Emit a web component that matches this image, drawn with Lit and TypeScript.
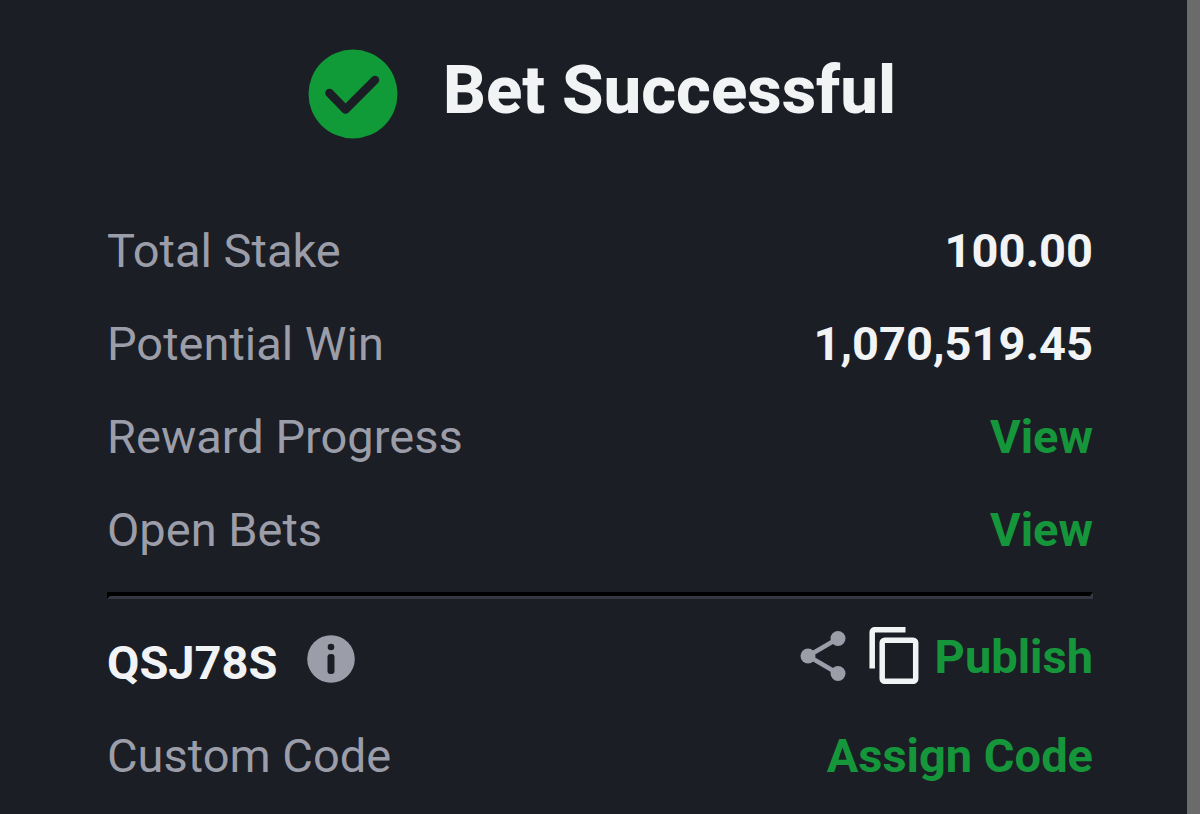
import { LitElement, html, css } from "lit";
import { customElement } from "lit/decorators.js";

@customElement("app-root")
export class AppRoot extends LitElement {
  static styles = css`
    :host {
      display: block;
      box-sizing: border-box;
      min-height: 100vh;
      background: #1b1e25;
      border-right: 13px solid #6a6b6a;
      font-family: Roboto, sans-serif;
      font-size: 47px;
      line-height: 56px;
      color: #9b9da9;
    }
    .sheet {
      padding: 49px 94px 0 107px;
    }
    header {
      display: flex;
      align-items: center;
      justify-content: center;
      gap: 45px;
      padding-left: 4px;
      margin-bottom: 84px;
    }
    h1 {
      margin: 0;
      font-size: 67px;
      line-height: 80px;
      font-weight: 800;
      color: #f2f3f5;
      padding-bottom: 8px;
    }
    svg {
      display: block;
    }
    .check {
      width: 90px;
      height: 90px;
    }
    .rows {
      display: grid;
      gap: 37px;
      margin: 0;
    }
    .row {
      display: flex;
      align-items: center;
      justify-content: space-between;
    }
    dt,
    dd {
      margin: 0;
    }
    dd,
    .code {
      font-weight: 700;
      color: #f2f3f5;
    }
    a,
    button {
      font: inherit;
      font-weight: 700;
      color: #16963a;
      text-decoration: none;
      background: none;
      border: 0;
      padding: 0;
      cursor: pointer;
    }
    .rule {
      margin: 34px 0 28px;
      border: 3px solid;
      border-top-width: 4px;
      border-color: #000 #353843 #353843 #000;
    }
    .booking {
      min-height: 64px;
    }
    .group {
      display: flex;
      align-items: flex-start;
      align-self: flex-end;
      gap: 30px;
    }
    .actions {
      display: flex;
      align-items: flex-end;
      align-self: flex-start;
      gap: 16px;
    }
    .icons {
      display: flex;
      align-items: center;
      gap: 23px;
      padding-bottom: 1px;
    }
  `;

  render() {
    return html`
      <main class="sheet">
        <header>
          <svg class="check" viewBox="0 0 90 90" aria-hidden="true">
            <circle cx="45" cy="45" r="44.5" fill="#109a38" />
            <path d="M21.500 44 37.500 60.500 67 31" fill="none" stroke="#1b1e25" stroke-width="8.500" stroke-linecap="round" stroke-linejoin="round" />
          </svg>
          <h1>Bet Successful</h1>
        </header>
        <dl class="rows">
          <div class="row"><dt>Total Stake</dt><dd>100.00</dd></div>
          <div class="row"><dt>Potential Win</dt><dd>1,070,519.45</dd></div>
          <div class="row"><dt>Reward Progress</dt><dd><a href="#rewards">View</a></dd></div>
          <div class="row"><dt>Open Bets</dt><dd><a href="#bets">View</a></dd></div>
        </dl>
        <hr class="rule" />
        <section class="rows">
          <div class="row booking">
            <div class="group">
              <span class="code">QSJ78S</span>
              <button aria-label="About this code">
                <svg width="48" height="48" viewBox="0 0 48 48">
                  <circle cx="24" cy="24" r="23.800" fill="#9b9da9" />
                  <circle cx="24" cy="12" r="3.300" fill="#1b1e25" />
                  <rect x="20.500" y="19" width="7" height="20" rx="3" fill="#1b1e25" />
                </svg>
              </button>
            </div>
            <div class="actions">
              <div class="icons">
                <button aria-label="Share">
                  <svg width="46" height="50" viewBox="0 0 46 50">
                    <path d="M38 7.500 8 25l30 17.500" fill="none" stroke="#9b9da9" stroke-width="4.500" />
                    <circle cx="38" cy="7.500" r="7.500" fill="#9b9da9" />
                    <circle cx="8" cy="25" r="7.500" fill="#9b9da9" />
                    <circle cx="38" cy="42.500" r="7.500" fill="#9b9da9" />
                  </svg>
                </button>
                <button aria-label="Copy code">
                  <svg width="50" height="57" viewBox="0 0 50 57">
                    <g fill="none" stroke="#f2f3f5" stroke-width="5.500">
                      <path d="M3.200 41.500V5.200a2.500 2.500 0 0 1 2.500-2.500H36.500" />
                      <rect x="13.200" y="13.200" width="33.500" height="41" rx="2.500" />
                    </g>
                  </svg>
                </button>
              </div>
              <button>Publish</button>
            </div>
          </div>
          <div class="row"><span>Custom Code</span><button>Assign Code</button></div>
        </section>
      </main>
    `;
  }
}
